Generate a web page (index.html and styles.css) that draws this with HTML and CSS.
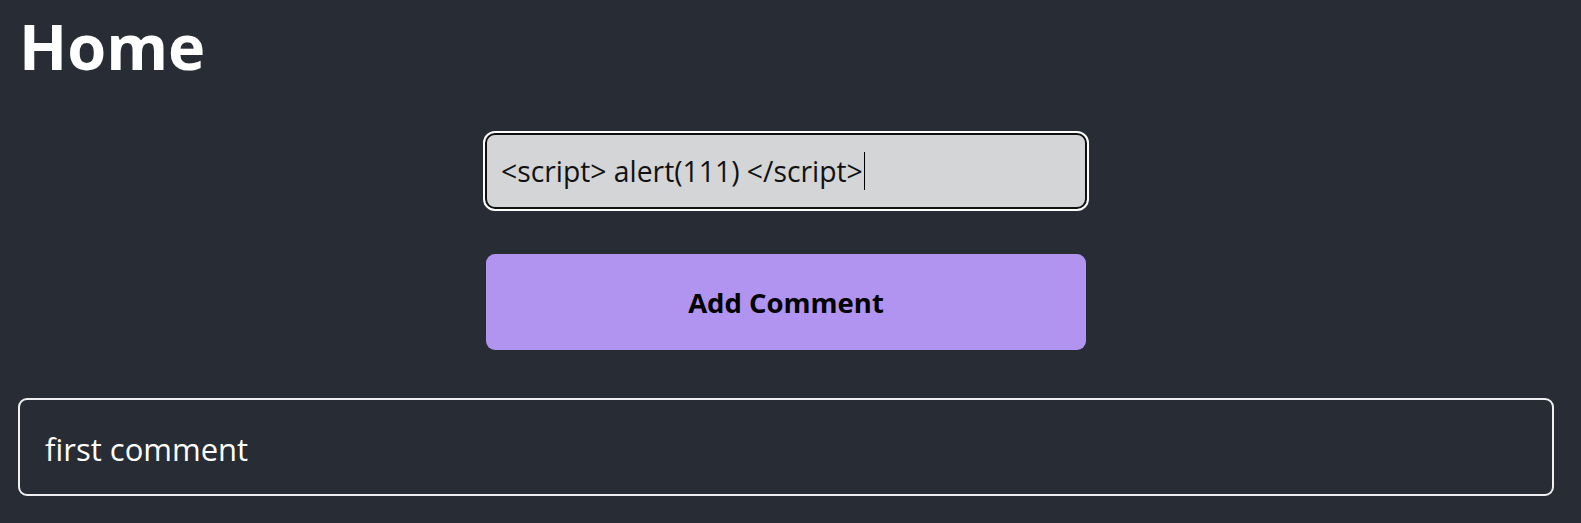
FILE: index.html
```html
<!DOCTYPE html>
<html lang="en">
<head>
<meta charset="utf-8">
<title>Home</title>
<link rel="stylesheet" href="styles.css">
</head>
<body>
<main class="page">
  <h1 class="title">Home</h1>
  <form class="comment-form">
    <div class="field"><span class="field-text">&lt;script&gt; alert(111) &lt;/script&gt;</span><span class="caret"></span></div>
    <button type="button" class="add-btn">Add Comment</button>
  </form>
  <ul class="comments">
    <li class="comment">first comment</li>
  </ul>
</main>
</body>
</html>
```
FILE: styles.css
```css
html, body {
  margin: 0;
  background: #282c34;
  font-family: "Open Sans", "Noto Sans", sans-serif;
}
.page {
  padding: 0 27px 0 18px;
  height: 523px;
  box-sizing: border-box;
  overflow: hidden;
}
.title {
  margin: 14px 0 0 1px;
  font-size: 63px;
  line-height: 1;
  font-weight: 700;
  color: #ffffff;
}
.comment-form {
  display: flex;
  flex-direction: column;
  align-items: center;
  margin-top: 56px;
}
.field {
  box-sizing: border-box;
  width: 602px;
  height: 76px;
  display: flex;
  align-items: center;
  padding-left: 14px;
  background: #d4d5d7;
  border: 2px solid #111111;
  border-radius: 10px;
  outline: 2px solid #ffffff;
  color: #111111;
  font-size: 28.3px;
}
.field-text {
  white-space: pre;
}
.caret {
  display: inline-block;
  width: 1.5px;
  height: 38px;
  background: #000000;
  margin-left: 1px;
}
.add-btn {
  margin-top: 45px;
  width: 600px;
  height: 96px;
  border: none;
  border-radius: 9px;
  background: #b194f0;
  color: #000000;
  font-family: inherit;
  font-size: 27.5px;
  font-weight: 700;
  padding: 0;
}
.comments {
  list-style: none;
  margin: 48px 0 0;
  padding: 0;
}
.comment {
  box-sizing: border-box;
  height: 98px;
  display: flex;
  align-items: center;
  padding: 4px 0 0 25px;
  border: 2px solid #f0f0f2;
  border-radius: 9px;
  color: #ffffff;
  font-size: 31px;
}
```
